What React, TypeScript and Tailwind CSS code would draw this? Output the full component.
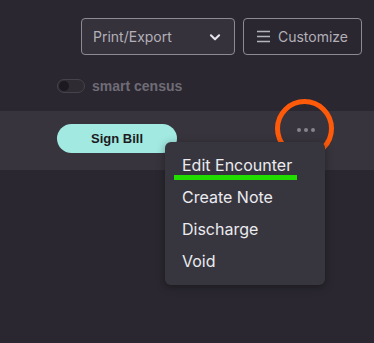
import React from 'react';

function Chevron() {
  return (
    <svg width="14" height="14" viewBox="0 0 24 24" fill="none" stroke="#e6e4ea" strokeWidth="3.5" strokeLinecap="round" strokeLinejoin="round">
      <path d="M5 9l7 7 7-7" />
    </svg>
  );
}

function Lines() {
  return (
    <svg width="13" height="13" viewBox="0 0 13 13" fill="none" stroke="#b5b3ba" strokeWidth="1.4">
      <path d="M0 1.5h13M0 6.5h13M0 11.5h13" />
    </svg>
  );
}

export default function App() {
  const items = ['Edit Encounter', 'Create Note', 'Discharge', 'Void'];

  return (
    <div className="relative w-[374px] h-[343px] overflow-hidden bg-[#2a2730]" style={{ fontFamily: 'Inter, "Noto Sans", sans-serif' }}>
      {/* Toolbar */}
      <div className="flex justify-end gap-2 pt-[18px] pr-3">
        <button className="flex items-center justify-between w-[154px] h-[37px] pl-[11px] pr-[12px] rounded-[4px] border border-[#8d8a93] bg-[#35323b] text-[14px] text-[#b3b0b8]">
          <span>Print/Export</span>
          <Chevron />
        </button>
        <button className="flex items-center justify-center gap-[8px] w-[119px] h-[37px] rounded-[4px] border border-[#8d8a93] text-[14px] text-[#b3b0b8]">
          <Lines />
          <span>Customize</span>
        </button>
      </div>

      {/* Smart census toggle */}
      <div className="flex items-center gap-[7px] pl-[57px] mt-[24px] h-[14px]">
        <div className="relative w-[28px] h-[14px] rounded-full border border-[#46434c] bg-[#2e2b33]">
          <div className="absolute left-[1px] top-[1px] w-[10px] h-[10px] rounded-full bg-[#1c1a20]" />
        </div>
        <span className="text-[14px] font-bold text-[#6f6c76]" style={{ fontFamily: '"Liberation Sans", Arial, sans-serif' }}>smart census</span>
      </div>

      {/* Row */}
      <div className="flex items-start justify-between mt-[18px] h-[59px] bg-[#37343d] pl-[57px] pr-[59px]">
        <button className="mt-[13px] w-[120px] h-[29px] rounded-full bg-[#a1e9e1] text-[13px] font-bold text-[#1d1b21]" style={{ fontFamily: '"Liberation Sans", Arial, sans-serif' }}>
          Sign Bill
        </button>
        <div className="flex items-center gap-[3px] mt-[17px]">
          <span className="w-[4px] h-[4px] rounded-full bg-[#86838c]" />
          <span className="w-[4px] h-[4px] rounded-full bg-[#86838c]" />
          <span className="w-[4px] h-[4px] rounded-full bg-[#86838c]" />
        </div>
      </div>

      {/* Orange highlight circle */}
      <div className="absolute left-[275px] top-[99px] w-[59px] h-[59px] rounded-full border-[5px] border-[#ff5a0a]" />

      {/* Dropdown menu */}
      <div className="absolute left-[165px] top-[142px] w-[160px] h-[143px] rounded-[6px] bg-[#37363e] shadow-[0_2px_8px_rgba(0,0,0,0.35)] pt-[7px]">
        {items.map((label) => (
          <div key={label} className="h-[32px] pl-[17px] flex items-center text-[16px] text-[#ecebf0]">
            {label}
          </div>
        ))}
      </div>

      {/* Green underline */}
      <div className="absolute left-[174px] top-[175px] w-[123px] h-[5px] bg-[#22dd00]" />
    </div>
  );
}
